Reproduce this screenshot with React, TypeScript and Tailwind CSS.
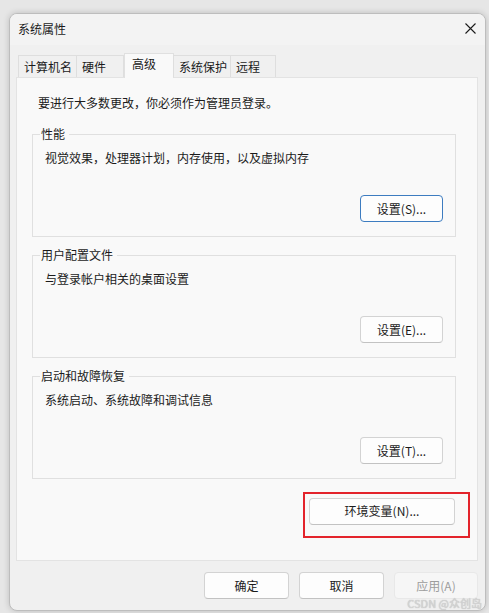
const font = { fontFamily: '"Noto Sans CJK SC", "Noto Sans", sans-serif' };

const tabs = [
  { label: "计算机名", w: "w-[59px]" },
  { label: "硬件", w: "w-[48px]" },
  { label: "高级", w: "w-[50px]", active: true },
  { label: "系统保护", w: "w-[58px]" },
  { label: "远程", w: "w-[46px]" },
];

const Group = ({ title, desc, btn, focused }: { title: string; desc: string; btn: string; focused?: boolean }) => (
  <div className="relative border border-[#e0e0e0] w-[424px] h-[103px] pt-[15px] pl-[12px] pr-[12px] flex flex-col">
    <span className="absolute left-[7px] -top-[9px] px-[1px] pr-[4px] bg-[#f9f9f9] leading-[16px] text-[12px] text-[#1b1b1b]">
      {title}
    </span>
    <div className="leading-[16px] text-[12px] text-[#1b1b1b]">{desc}</div>
    <div className="flex justify-end mt-[29px]">
      <button
        className={
          "w-[83px] h-[27px] rounded-[4px] bg-[#fdfdfd] text-[12px] text-[#1b1b1b] border " +
          (focused ? "border-[#3d7cc0]" : "border-[#d3d3d3] border-b-[#c2c2c2]")
        }
      >
        {btn}
      </button>
    </div>
  </div>
);

export default function App() {
  return (
    <div className="relative w-[489px] h-[613px] bg-[#e6e6e6] pl-[9px] pt-[13px] overflow-hidden" style={font}>
      <div className="w-[477px] h-[598px] rounded-[8px] border border-[#bdbdbd] bg-[#f0f0f0] shadow-[0_0_6px_rgba(0,0,0,0.18)] flex flex-col overflow-hidden">
        {/* title bar */}
        <div className="h-[31px] bg-[#f3f3f3] flex items-center justify-between pl-[8px] pr-[9px] pb-[2px]">
          <span className="text-[12px] text-[#1b1b1b] leading-[16px]">系统属性</span>
          <svg width="11" height="11" viewBox="0 0 11 11">
            <path d="M0.5 0.5 L10.5 10.5 M10.5 0.5 L0.5 10.5" stroke="#1b1b1b" strokeWidth="1.1" />
          </svg>
        </div>

        {/* tabs */}
        <div className="flex items-end h-[25px] mt-[8px] pl-[8px] -mb-px relative z-10">
          {tabs.map((t) =>
            t.active ? (
              <div
                key={t.label}
                className={`${t.w} h-[25px] bg-[#f9f9f9] border border-b-0 border-[#e0e0e0] text-[12px] leading-[16px] text-[#1b1b1b] pl-[7px] pt-[2px]`}
              >
                {t.label}
              </div>
            ) : (
              <div
                key={t.label}
                className={`${t.w} h-[22px] mb-px bg-[#f0f0f0] border border-b-0 border-[#dedede] -ml-px first:ml-0 text-[12px] leading-[16px] text-[#1b1b1b] pl-[5px] pt-[3px]`}
              >
                {t.label}
              </div>
            )
          )}
        </div>

        {/* panel */}
        <div className="ml-[6px] w-[462px] h-[484px] border border-[#e3e3e3] bg-[#f9f9f9] flex flex-col">
          <div className="pl-[21px] pt-[17px] text-[12px] leading-[16px] text-[#1b1b1b]">
            要进行大多数更改，你必须作为管理员登录。
          </div>
          <div className="pl-[15px] mt-[23px] flex flex-col gap-[18px]">
            <Group title="性能" desc="视觉效果，处理器计划，内存使用，以及虚拟内存" btn="设置(S)..." focused />
            <Group title="用户配置文件" desc="与登录帐户相关的桌面设置" btn="设置(E)..." />
            <Group title="启动和故障恢复" desc="系统启动、系统故障和调试信息" btn="设置(T)..." />
          </div>
          <div className="self-end mr-[7px] mt-[13px] border-2 border-[#e3232b] pt-[3px] pl-[4px] pr-[13px] pb-[11px]">
            <button className="w-[146px] h-[27px] rounded-[4px] bg-[#fdfdfd] border border-[#d3d3d3] border-b-[#c2c2c2] text-[12px] text-[#1b1b1b]">
              环境变量(N)...
            </button>
          </div>
        </div>

        {/* bottom buttons */}
        <div className="flex justify-end gap-[10px] mt-[11px] pr-[7px]">
          <button className="w-[85px] h-[27px] rounded-[4px] bg-[#fdfdfd] border border-[#d3d3d3] border-b-[#c2c2c2] text-[12px] text-[#1b1b1b]">
            确定
          </button>
          <button className="w-[85px] h-[27px] rounded-[4px] bg-[#fdfdfd] border border-[#d3d3d3] border-b-[#c2c2c2] text-[12px] text-[#1b1b1b]">
            取消
          </button>
          <button className="w-[84px] h-[27px] rounded-[4px] bg-[#f6f6f6] border border-[#e8e8e8] text-[12px] text-[#9d9d9d]">
            应用(A)
          </button>
        </div>
      </div>
      <span className="absolute right-[7px] bottom-[4px] text-[11px] leading-[12px] text-[#d4d4d4] [text-shadow:0_0_1px_#b0b0b0]">
        CSDN @众创岛
      </span>
    </div>
  );
}
